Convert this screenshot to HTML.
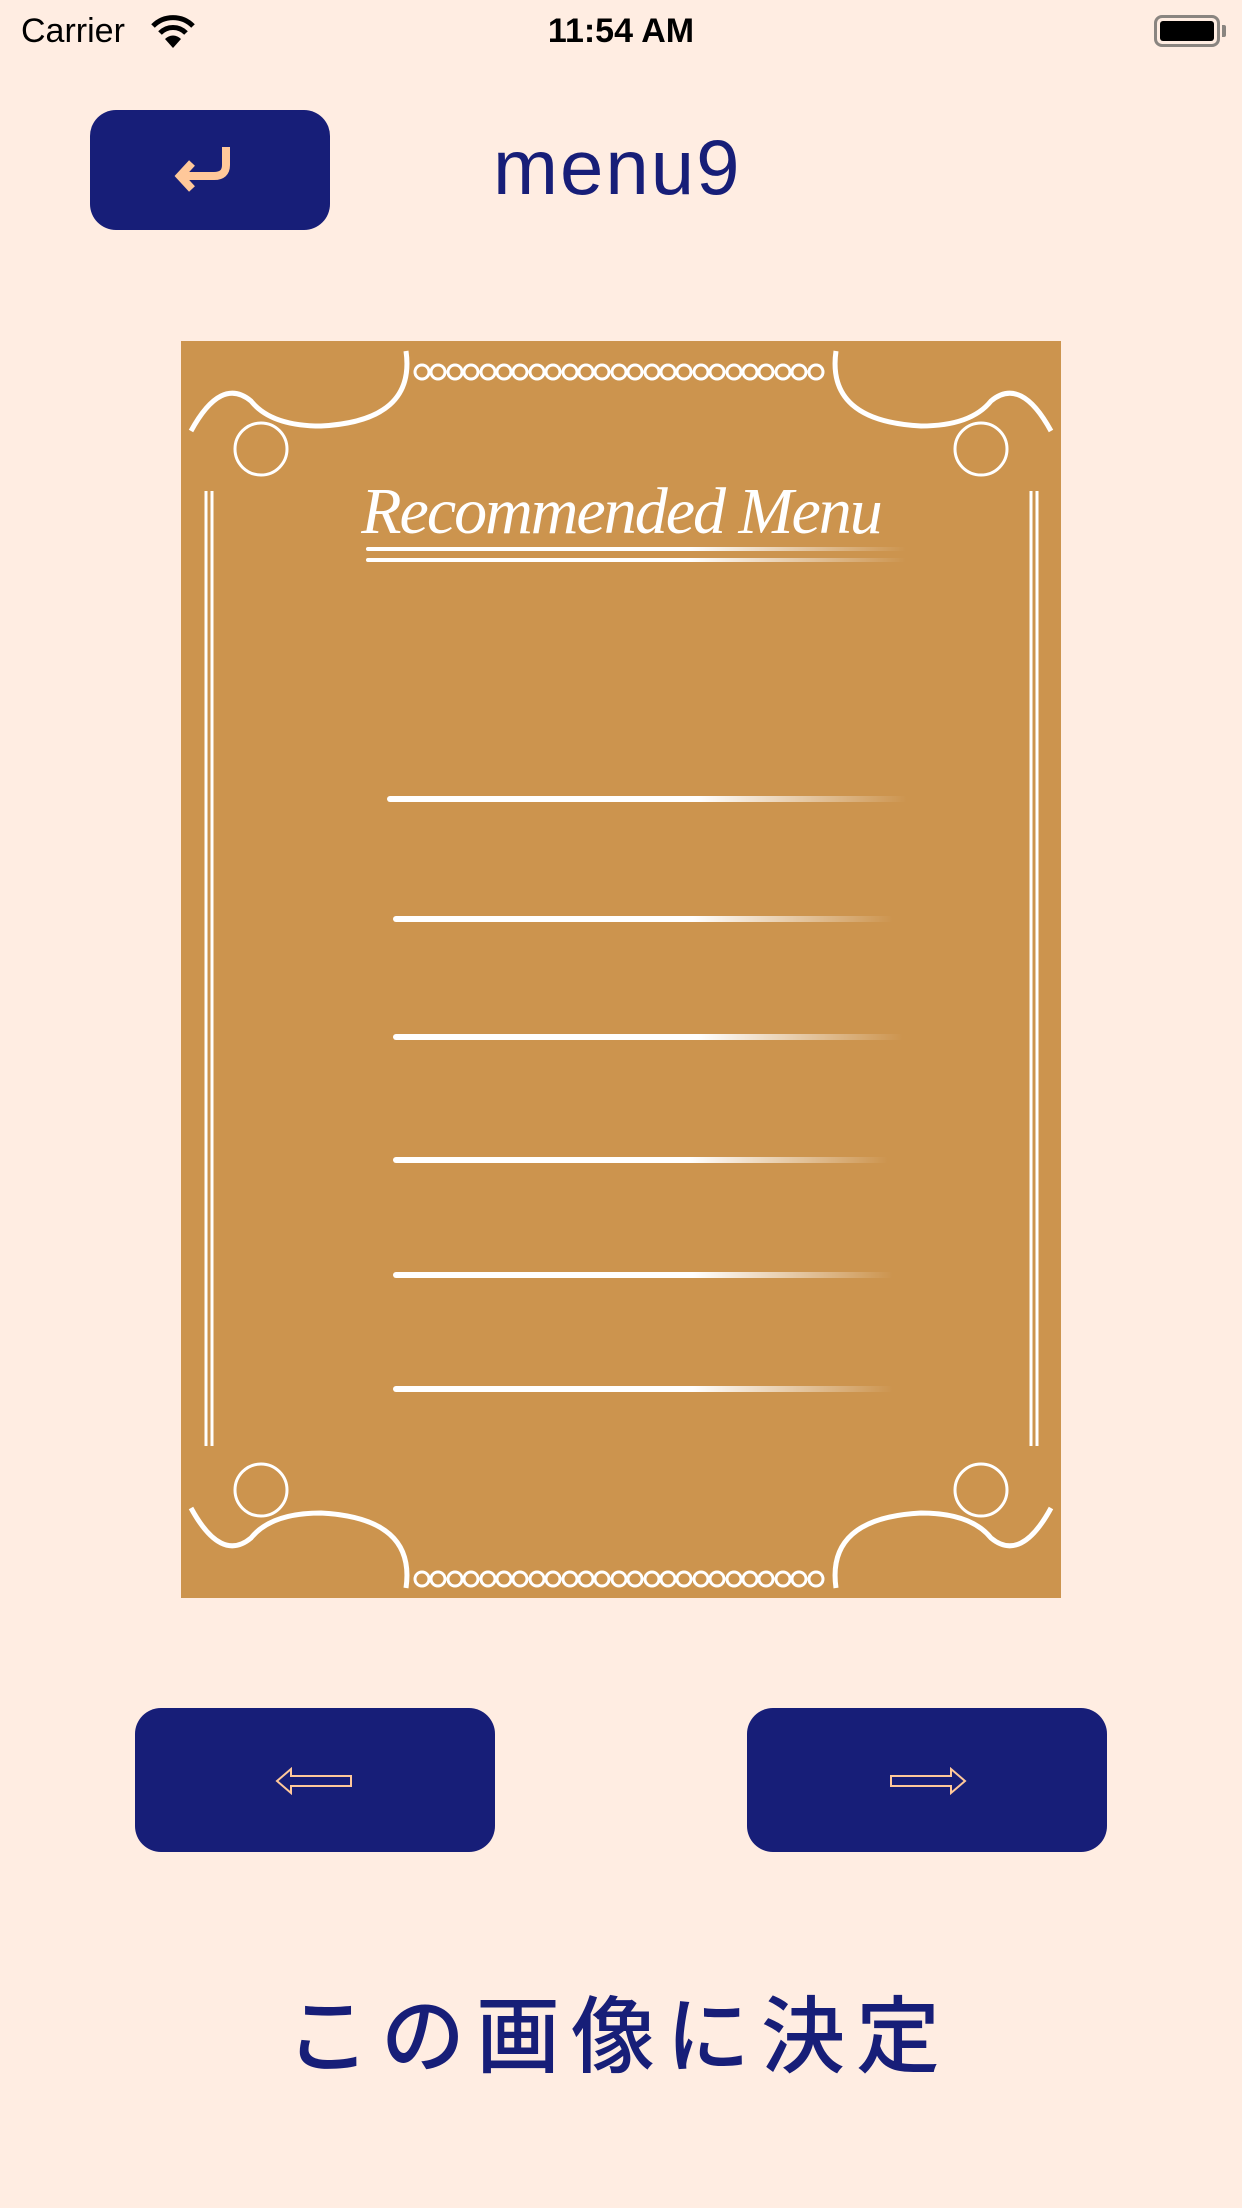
<!DOCTYPE html>
<html><head><meta charset="utf-8"><style>
*{margin:0;padding:0;box-sizing:border-box}
body{width:1242px;height:2208px;background:#FFEDE2;position:relative;overflow:hidden;font-family:"Liberation Sans",sans-serif}
.abs{position:absolute}
.btn{position:absolute;background:#171E78;border-radius:26px}
.ln{position:absolute;height:6px;background:linear-gradient(90deg,#fff 0%,#fff 60%,rgba(255,255,255,0) 100%);border-radius:3px}
</style></head><body>
<div class="abs" style="left:21px;top:12px;font-size:34px;color:#000">Carrier</div>
<svg class="abs" style="left:150px;top:14px" width="46" height="36" viewBox="0 0 46 36"><path d="M3 12 A28 28 0 0 1 43 12" stroke="#000" stroke-width="5" fill="none"/><path d="M10 19 A18 18 0 0 1 36 19" stroke="#000" stroke-width="5" fill="none"/><path d="M23 34 L15 25 A11 11 0 0 1 31 25 Z" fill="#000"/></svg>
<div class="abs" style="left:0;width:1242px;text-align:center;top:12px;font-size:34px;font-weight:bold;color:#000">11:54 AM</div>
<div class="abs" style="left:1154px;top:15px;width:66px;height:32px;border:3px solid #8a8580;border-radius:8px"><div style="position:absolute;left:3px;top:3px;width:54px;height:20px;background:#000;border-radius:3px"></div></div>
<div class="abs" style="left:1222px;top:25px;width:4px;height:12px;background:#8a8580;border-radius:0 2px 2px 0"></div>

<div class="btn" style="left:90px;top:110px;width:240px;height:120px;border-radius:26px"></div>
<svg class="abs" style="left:172px;top:145px" width="70" height="52" viewBox="0 0 70 52"><path d="M54 2 V20 Q54 31 42 31 H12" stroke="#FFC89A" stroke-width="8" fill="none"/><path d="M20 18 L8 31 L20 44" stroke="#FFC89A" stroke-width="8" fill="none"/></svg>
<div class="abs" style="left:493px;top:122px;font-size:78px;color:#171E78;letter-spacing:2px">menu9</div>

<div class="abs" style="left:181px;top:341px;width:880px;height:1257px;background:#CC944E">
<svg width="880" height="1257" viewBox="0 0 880 1257" style="position:absolute;left:0;top:0">
<g stroke="#fff" stroke-width="3">
<line x1="25" y1="150" x2="25" y2="1105"/><line x1="31" y1="150" x2="31" y2="1105"/>
<line x1="850" y1="150" x2="850" y2="1105"/><line x1="856" y1="150" x2="856" y2="1105"/>
</g>
<g fill="none" stroke="#fff" stroke-width="5">
<path d="M225 10 Q235 80 140 85 Q90 85 70 60 Q40 35 10 90"/>
<path d="M655 10 Q645 80 740 85 Q790 85 810 60 Q840 35 870 90"/>
<path d="M225 1247 Q235 1177 140 1172 Q90 1172 70 1197 Q40 1222 10 1167"/>
<path d="M655 1247 Q645 1177 740 1172 Q790 1172 810 1197 Q840 1222 870 1167"/>
<circle cx="80" cy="108" r="26" stroke-width="3"/><circle cx="800" cy="108" r="26" stroke-width="3"/>
<circle cx="80" cy="1149" r="26" stroke-width="3"/><circle cx="800" cy="1149" r="26" stroke-width="3"/>
</g>
<g fill="none" stroke="#fff" stroke-width="3">
<circle cx="241" cy="31" r="7"/><circle cx="257" cy="31" r="7"/><circle cx="274" cy="31" r="7"/><circle cx="290" cy="31" r="7"/><circle cx="307" cy="31" r="7"/><circle cx="323" cy="31" r="7"/><circle cx="339" cy="31" r="7"/><circle cx="356" cy="31" r="7"/><circle cx="372" cy="31" r="7"/><circle cx="389" cy="31" r="7"/><circle cx="405" cy="31" r="7"/><circle cx="421" cy="31" r="7"/><circle cx="438" cy="31" r="7"/><circle cx="454" cy="31" r="7"/><circle cx="471" cy="31" r="7"/><circle cx="487" cy="31" r="7"/><circle cx="503" cy="31" r="7"/><circle cx="520" cy="31" r="7"/><circle cx="536" cy="31" r="7"/><circle cx="553" cy="31" r="7"/><circle cx="569" cy="31" r="7"/><circle cx="585" cy="31" r="7"/><circle cx="602" cy="31" r="7"/><circle cx="618" cy="31" r="7"/><circle cx="635" cy="31" r="7"/>
<circle cx="241" cy="1238" r="7"/><circle cx="257" cy="1238" r="7"/><circle cx="274" cy="1238" r="7"/><circle cx="290" cy="1238" r="7"/><circle cx="307" cy="1238" r="7"/><circle cx="323" cy="1238" r="7"/><circle cx="339" cy="1238" r="7"/><circle cx="356" cy="1238" r="7"/><circle cx="372" cy="1238" r="7"/><circle cx="389" cy="1238" r="7"/><circle cx="405" cy="1238" r="7"/><circle cx="421" cy="1238" r="7"/><circle cx="438" cy="1238" r="7"/><circle cx="454" cy="1238" r="7"/><circle cx="471" cy="1238" r="7"/><circle cx="487" cy="1238" r="7"/><circle cx="503" cy="1238" r="7"/><circle cx="520" cy="1238" r="7"/><circle cx="536" cy="1238" r="7"/><circle cx="553" cy="1238" r="7"/><circle cx="569" cy="1238" r="7"/><circle cx="585" cy="1238" r="7"/><circle cx="602" cy="1238" r="7"/><circle cx="618" cy="1238" r="7"/><circle cx="635" cy="1238" r="7"/>
</g>
<text x="440" y="192" text-anchor="middle" font-family="'Liberation Serif',serif" font-style="italic" font-size="66" fill="#fff" letter-spacing="-2">Recommended Menu</text>
</svg>
<div class="ln" style="left:185px;top:206px;width:540px;height:4px"></div>
<div class="ln" style="left:185px;top:217px;width:540px;height:4px"></div>
<div class="ln" style="left:206px;top:455px;width:520px"></div>
<div class="ln" style="left:212px;top:575px;width:500px"></div>
<div class="ln" style="left:212px;top:693px;width:510px"></div>
<div class="ln" style="left:212px;top:816px;width:495px"></div>
<div class="ln" style="left:212px;top:931px;width:500px"></div>
<div class="ln" style="left:212px;top:1045px;width:500px"></div>
</div>

<div class="btn" style="left:135px;top:1708px;width:360px;height:144px"></div>
<svg class="abs" style="left:275px;top:1767px" width="78" height="28" viewBox="0 0 78 28"><path d="M2 14 L16 2 V9 H76 V19 H16 V26 Z" fill="none" stroke="#FFC89A" stroke-width="2"/></svg>
<div class="btn" style="left:747px;top:1708px;width:360px;height:144px"></div>
<svg class="abs" style="left:889px;top:1767px" width="78" height="28" viewBox="0 0 78 28"><path d="M76 14 L62 2 V9 H2 V19 H62 V26 Z" fill="none" stroke="#FFC89A" stroke-width="2"/></svg>

<div class="abs" style="left:286px;top:1970px;font-size:84px;letter-spacing:11px;color:#171E78;font-family:'Liberation Sans','Noto Sans CJK JP',sans-serif;font-weight:500;white-space:nowrap">この画像に決定</div>
</body></html>
